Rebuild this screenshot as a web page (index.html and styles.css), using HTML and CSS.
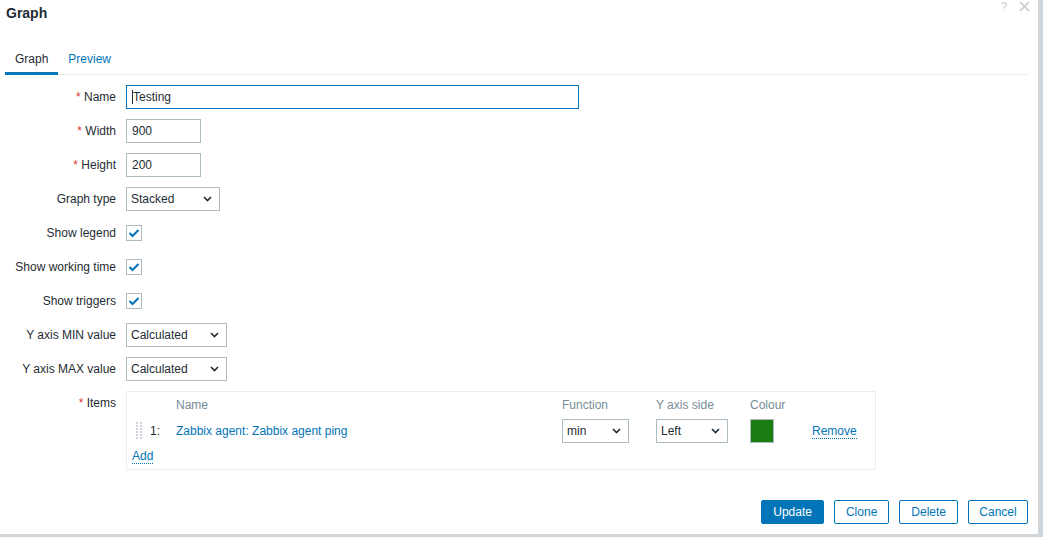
FILE: index.html
```html
<!DOCTYPE html>
<html>
<head>
<meta charset="utf-8">
<link rel="stylesheet" href="styles.css">
</head>
<body>
<div class="dialog">
  <div class="header">
    <h1 class="title">Graph</h1>
    <div class="header-icons">
      <span class="help">?</span>
      <svg class="close" width="11" height="11" viewBox="0 0 11 11"><path d="M1 1L10 10M10 1L1 10" stroke="#c2cad0" stroke-width="1.6" fill="none"/></svg>
    </div>
  </div>
  <div class="tabs">
    <span class="tab active">Graph</span>
    <span class="tab link">Preview</span>
  </div>
  <div class="form">
    <div class="label"><span class="req">*</span> Name</div>
    <div class="field"><div class="input input-name focus"><span class="caret"></span>Testing</div></div>

    <div class="label"><span class="req">*</span> Width</div>
    <div class="field"><div class="input input-num">900</div></div>

    <div class="label"><span class="req">*</span> Height</div>
    <div class="field"><div class="input input-num">200</div></div>

    <div class="label">Graph type</div>
    <div class="field"><div class="select sel-type"><span>Stacked</span><svg class="chev" width="9" height="6" viewBox="0 0 9 6"><path d="M1 1L4.5 4.5L8 1" stroke="#1f2c33" stroke-width="1.6" fill="none"/></svg></div></div>

    <div class="label">Show legend</div>
    <div class="field"><span class="check"><svg width="12" height="10" viewBox="0 0 12 10"><path d="M1.5 5L4.5 8L10.5 2" stroke="#0275b8" stroke-width="2" fill="none"/></svg></span></div>

    <div class="label">Show working time</div>
    <div class="field"><span class="check"><svg width="12" height="10" viewBox="0 0 12 10"><path d="M1.5 5L4.5 8L10.5 2" stroke="#0275b8" stroke-width="2" fill="none"/></svg></span></div>

    <div class="label">Show triggers</div>
    <div class="field"><span class="check"><svg width="12" height="10" viewBox="0 0 12 10"><path d="M1.5 5L4.5 8L10.5 2" stroke="#0275b8" stroke-width="2" fill="none"/></svg></span></div>

    <div class="label">Y axis MIN value</div>
    <div class="field"><div class="select sel-axis"><span>Calculated</span><svg class="chev" width="9" height="6" viewBox="0 0 9 6"><path d="M1 1L4.5 4.5L8 1" stroke="#1f2c33" stroke-width="1.6" fill="none"/></svg></div></div>

    <div class="label">Y axis MAX value</div>
    <div class="field"><div class="select sel-axis"><span>Calculated</span><svg class="chev" width="9" height="6" viewBox="0 0 9 6"><path d="M1 1L4.5 4.5L8 1" stroke="#1f2c33" stroke-width="1.6" fill="none"/></svg></div></div>

    <div class="label"><span class="req">*</span> Items</div>
    <div class="field">
      <div class="items">
        <div class="items-row items-head">
          <span class="c-handle"></span>
          <span class="c-num"></span>
          <span class="c-name">Name</span>
          <span class="c-func">Function</span>
          <span class="c-side">Y axis side</span>
          <span class="c-col">Colour</span>
          <span class="c-rem"></span>
        </div>
        <div class="items-row items-item">
          <span class="c-handle"><svg width="6" height="18" viewBox="0 0 6 18">
            <g fill="#cfd5da">
              <rect x="0" y="0" width="2" height="2"/><rect x="4" y="0" width="2" height="2"/>
              <rect x="0" y="3" width="2" height="2"/><rect x="4" y="3" width="2" height="2"/>
              <rect x="0" y="6" width="2" height="2"/><rect x="4" y="6" width="2" height="2"/>
              <rect x="0" y="9" width="2" height="2"/><rect x="4" y="9" width="2" height="2"/>
              <rect x="0" y="12" width="2" height="2"/><rect x="4" y="12" width="2" height="2"/>
              <rect x="0" y="15" width="2" height="2"/><rect x="4" y="15" width="2" height="2"/>
            </g></svg></span>
          <span class="c-num">1:</span>
          <span class="c-name"><span class="link">Zabbix agent: Zabbix agent ping</span></span>
          <span class="c-func"><div class="select sel-func"><span>min</span><svg class="chev" width="9" height="6" viewBox="0 0 9 6"><path d="M1 1L4.5 4.5L8 1" stroke="#1f2c33" stroke-width="1.6" fill="none"/></svg></div></span>
          <span class="c-side"><div class="select sel-side"><span>Left</span><svg class="chev" width="9" height="6" viewBox="0 0 9 6"><path d="M1 1L4.5 4.5L8 1" stroke="#1f2c33" stroke-width="1.6" fill="none"/></svg></div></span>
          <span class="c-col"><span class="swatch"></span></span>
          <span class="c-rem"><span class="link dotted">Remove</span></span>
        </div>
        <div class="items-add"><span class="link dotted">Add</span></div>
      </div>
    </div>
  </div>
  <div class="footer">
    <button class="btn primary">Update</button>
    <button class="btn">Clone</button>
    <button class="btn">Delete</button>
    <button class="btn btn-cancel">Cancel</button>
  </div>
</div>
</body>
</html>
```

FILE: styles.css
```css
html, body {
  margin: 0;
  padding: 0;
}
body {
  background: #d0d5d9;
  font-family: "Liberation Sans", Arial, sans-serif;
  font-size: 12px;
  color: #1f2c33;
  width: 1043px;
  height: 537px;
  overflow: hidden;
}
.dialog {
  width: 1038px;
  height: 534px;
  background: #ffffff;
  display: flex;
  flex-direction: column;
  box-sizing: border-box;
}
.header {
  height: 44px;
  display: flex;
  justify-content: space-between;
  align-items: flex-start;
  padding-left: 6px;
}
.title {
  margin: 0;
  font-size: 14px;
  font-weight: bold;
  line-height: 26px;
  color: #1f2c33;
}
.header-icons {
  display: flex;
  align-items: center;
  gap: 12px;
  margin-right: 8px;
  height: 12px;
}
.help {
  color: #c2cad0;
  font-size: 11px;
  line-height: 12px;
}
.close {
  display: block;
}
.tabs {
  display: flex;
  margin: 0 10px 0 5px;
  border-bottom: 1px solid #ebeef0;
}
.tab {
  padding: 7px 10px 5px;
  line-height: 16px;
  border-bottom: 3px solid transparent;
  margin-bottom: -1px;
}
.tab.active {
  border-bottom-color: #0275b8;
  color: #1f2c33;
}
.link {
  color: #0275b8;
}
.dotted {
  border-bottom: 1px dotted #0275b8;
}
.form {
  margin-top: 10px;
  display: grid;
  grid-template-columns: 116px 1fr;
  column-gap: 10px;
  row-gap: 10px;
}
.label {
  text-align: right;
  line-height: 24px;
  white-space: nowrap;
}
.req {
  color: #e33734;
}
.field {
  display: flex;
  align-items: center;
  min-height: 24px;
}
.input {
  box-sizing: border-box;
  height: 24px;
  border: 1px solid #acbbc2;
  padding: 0 5px;
  line-height: 22px;
  display: flex;
  align-items: center;
}
.input.focus {
  border-color: #0275b8;
}
.caret {
  display: inline-block;
  width: 1px;
  height: 14px;
  background: #1f2c33;
}
.input-name {
  width: 453px;
}
.input-num {
  width: 75px;
}
.select {
  box-sizing: border-box;
  height: 24px;
  border: 1px solid #acbbc2;
  padding: 0 7px 0 4px;
  display: flex;
  align-items: center;
  justify-content: space-between;
}
.chev {
  display: block;
}
.sel-type {
  width: 94px;
}
.sel-axis {
  width: 101px;
}
.sel-func {
  width: 67px;
}
.sel-side {
  width: 72px;
}
.check {
  box-sizing: border-box;
  width: 16px;
  height: 16px;
  border: 1px solid #acbbc2;
  display: flex;
  align-items: center;
  justify-content: center;
}
.check svg {
  display: block;
}
.items {
  box-sizing: border-box;
  width: 750px;
  border: 1px solid #ebeef0;
  padding: 4px 5px 5px;
  display: flex;
  flex-direction: column;
}
.items-row {
  display: flex;
  align-items: center;
}
.items-row > span {
  flex-shrink: 0;
}
.items-head {
  height: 18px;
  color: #768d99;
}
.items-item {
  height: 24px;
  margin-top: 5px;
}
.c-handle {
  width: 18px;
  padding-left: 4px;
  box-sizing: border-box;
  display: flex;
  align-items: center;
}
.c-handle svg {
  display: block;
}
.c-num {
  width: 26px;
}
.c-name {
  width: 386px;
}
.c-func {
  width: 94px;
}
.c-side {
  width: 94px;
}
.c-col {
  width: 62px;
}
.c-rem {
  width: 50px;
}
.swatch {
  display: block;
  box-sizing: border-box;
  width: 24px;
  height: 24px;
  border: 1px solid #acbbc2;
  background: #1a7c11;
}
.items-add {
  margin-top: 5px;
  line-height: 16px;
}
.footer {
  margin-top: auto;
  display: flex;
  justify-content: flex-end;
  gap: 10px;
  padding: 0 10px 10px 0;
}
.btn {
  box-sizing: border-box;
  height: 24px;
  padding: 0 11px;
  border: 1px solid #0275b8;
  border-radius: 2px;
  background: #ffffff;
  color: #0275b8;
  font-family: "Liberation Sans", Arial, sans-serif;
  font-size: 12px;
  line-height: 22px;
}
.btn-cancel {
  width: 60px;
  padding: 0;
}
.btn.primary {
  background: #0275b8;
  color: #ffffff;
}
```
